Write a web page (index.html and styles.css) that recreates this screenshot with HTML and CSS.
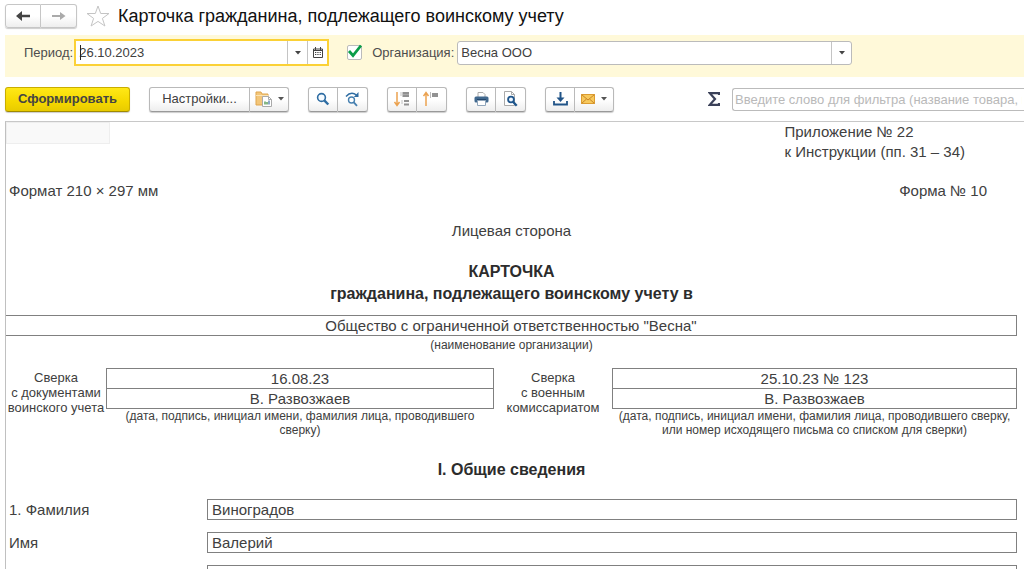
FILE: index.html
```html
<!DOCTYPE html>
<html lang="ru">
<head>
<meta charset="utf-8">
<meta name="viewport" content="width=device-width, initial-scale=1">
<title>Карточка гражданина, подлежащего воинскому учету</title>
<link rel="stylesheet" href="styles.css">
</head>
<body>
<header class="titlebar">
  <div class="btn-group nav">
    <button class="btn" type="button" aria-label="Назад"><svg width="14" height="10" viewBox="0 0 14 10"><path d="M6 0v3.700h8v2.600H6V10L0 5z" fill="#444"/></svg></button>
    <button class="btn" type="button" aria-label="Вперед"><svg width="14" height="10" viewBox="0 0 14 10"><path d="M8 1v3h-8v2h8v3L13.500 5z" fill="#aaa"/></svg></button>
  </div>
  <button class="star" type="button" aria-label="В избранное"><svg width="24" height="22" viewBox="0 0 24 22"><path d="M12 1l2.700 7.500H23l-6.600 4.900 2.500 7.600L12 16.400 5.100 21l2.500-7.600L1 8.500h8.300z" fill="#fff" stroke="#c4c4c4"/></svg></button>
  <h1 class="title">Карточка гражданина, подлежащего воинскому учету</h1>
</header>

<form class="filters">
  <label class="filter-label" for="period">Период:</label>
  <div class="field field-date">
    <input id="period" class="field-input" type="text" value="26.10.2023">
    <span class="caret"></span>
    <button class="field-btn" type="button" aria-label="Выбрать период"><svg width="6" height="4" viewBox="0 0 6 4"><path d="M0 0h6L3 3.500z" fill="#444"/></svg></button>
    <button class="field-btn" type="button" aria-label="Календарь"><svg width="10" height="11" viewBox="0 0 10 11"><path d="M.5 2h9v8.500h-9zM.5 3.500h9M2.500 0v3M7.500 0v3" fill="none" stroke="#444"/><path d="M2 5.500h6M2 7.500h6" stroke="#444" stroke-dasharray="1.300 1"/></svg></button>
  </div>
  <span class="check">
    <input id="use-org" class="check-input" type="checkbox" checked aria-label="Отбор по организации">
    <svg class="check-mark" width="16" height="15" viewBox="0 0 16 15"><path d="M2 7l4 4.500L14 1.500" fill="none" stroke="#0a9d48" stroke-width="2.800"/></svg>
  </span>
  <label class="filter-label org-label" for="org">Организация:</label>
  <div class="field field-org">
    <select id="org" class="field-input"><option>Весна ООО</option></select>
    <span class="field-btn"><svg width="6" height="4" viewBox="0 0 6 4"><path d="M0 0h6L3 3.500z" fill="#444"/></svg></span>
  </div>
</form>

<div class="toolbar">
  <button class="btn primary" type="button">Сформировать</button>
  <div class="btn-group">
    <button class="btn settings" type="button">Настройки...</button>
    <button class="btn wide" type="button" aria-label="Варианты отчета">
      <svg width="17" height="16" viewBox="0 0 17 16"><path d="M1 3V1h5l1 2h6v11H1z" fill="#f3c679" stroke="#dfa54e"/><path d="M1 4.500h12" stroke="#fbe3b4"/><path d="M7.500 5.500h6l3 3v7h-9z" fill="#fff" stroke="#aaa"/><path d="M13.500 5.500v3h3" fill="none" stroke="#aaa"/><path d="M10 13.500v-3M12 13.500V11" stroke="#5da05e" stroke-width="1.500"/><path d="M14 13.500v-4" stroke="#658bb5" stroke-width="1.500"/></svg>
      <svg width="6" height="4" viewBox="0 0 6 4"><path d="M0 0h6L3 3.500z" fill="#555"/></svg>
    </button>
  </div>
  <div class="btn-group">
    <button class="btn" type="button" aria-label="Найти"><svg width="14" height="14" viewBox="0 0 14 14"><circle cx="5.500" cy="5.500" r="3.900" fill="#f6fbff" stroke="#2f6da3" stroke-width="1.600"/><path d="M8.300 8.300l4 4.200" stroke="#2f6da3" stroke-width="2.400"/></svg></button>
    <button class="btn" type="button" aria-label="Найти далее"><svg width="15" height="15" viewBox="0 0 15 15"><path d="M1 4.500Q6-1 11.500 3" fill="none" stroke="#2f6da3" stroke-width="1.500"/><path d="M13.500 0v5H8.800z" fill="#2f6da3"/><circle cx="6.500" cy="8" r="3" fill="#fff" stroke="#4780b0" stroke-width="1.400"/><path d="M8.800 10.300l3.200 3.500" stroke="#4780b0" stroke-width="1.800"/></svg></button>
  </div>
  <div class="btn-group">
    <button class="btn" type="button" aria-label="Развернуть группы"><svg width="17" height="16" viewBox="0 0 17 16"><path d="M3 1v12M.5 11L3 14.500 5.500 11" fill="none" stroke="#eba250" stroke-width="1.500"/><path d="M7 1.500v4M8 9.500v4" stroke="#888" stroke-dasharray="1 1"/><path d="M8.500 1H15v5H8.500zM10 9h5v2h-5zM10 12.500h5v2h-5z" fill="#929292"/><path d="M9 3.500h6" stroke="#aaa"/></svg></button>
    <button class="btn" type="button" aria-label="Свернуть группы"><svg width="17" height="16" viewBox="0 0 17 16"><path d="M3 2v13M.5 5L3 1.500 5.500 5" fill="none" stroke="#eba250" stroke-width="1.500"/><path d="M7.500 1.500v5" stroke="#777" stroke-dasharray="1 1"/><path d="M9 2h6v4H9z" fill="#929292"/></svg></button>
  </div>
  <div class="btn-group">
    <button class="btn" type="button" aria-label="Печать"><svg width="15" height="14" viewBox="0 0 15 14"><path d="M4 5V.5h5l2 2V5" fill="#fff" stroke="#aaa"/><rect x=".5" y="4.500" width="14" height="6" rx="1.500" fill="#41698f"/><path d="M3 7.500h9" stroke="#23476d"/><path d="M3.500 8.500h8v5h-8z" fill="#fff" stroke="#91a6bb"/></svg></button>
    <button class="btn" type="button" aria-label="Предварительный просмотр"><svg width="15" height="16" viewBox="0 0 15 16"><path d="M1.500.5h7l3 3v11h-10z" fill="#fff" stroke="#aaa"/><path d="M8.500.5v3h3" fill="none" stroke="#aaa"/><circle cx="8" cy="8.500" r="2.900" fill="#eef6ff" stroke="#1f568c" stroke-width="1.800"/><path d="M10 10.700l3.700 4" stroke="#1f568c" stroke-width="2.400"/></svg></button>
  </div>
  <div class="btn-group">
    <button class="btn" type="button" aria-label="Сохранить"><svg width="15" height="14" viewBox="0 0 15 14"><path d="M7.500 0v7" stroke="#215488" stroke-width="2"/><path d="M3.500 5.500h8l-4 4.500z" fill="#215488"/><path d="M1 9v3.500h13V9" fill="none" stroke="#215488" stroke-width="1.800"/></svg></button>
    <button class="btn wide" type="button" aria-label="Отправить"><svg width="14" height="11" viewBox="0 0 14 11"><path d="M.5.5h13v9H.5z" fill="#f7c95d" stroke="#dc9c31"/><path d="M.5.5L7 6l6.500-5.500M.5 9.500l5-4.500M13.500 9.500l-5-4.500" fill="none" stroke="#c98525"/></svg><svg width="6" height="4" viewBox="0 0 6 4"><path d="M0 0h6L3 3.500z" fill="#555"/></svg></button>
  </div>
  <div class="search">
    <svg class="sigma" width="12" height="14" viewBox="0 0 12 14"><path d="M11 3V1.200H1.800L7 7l-5.200 5.800H11V11" fill="none" stroke="#3b4159" stroke-width="2.200"/></svg>
    <input class="search-input" type="text" aria-label="Фильтр" placeholder="Введите слово для фильтра (название товара, покупателя и пр.)">
  </div>
</div>

<main class="sheet">
  <div class="cell-cursor"></div>
  <div class="appendix">Приложение № 22<br>к Инструкции (пп. 31 – 34)</div>
  <div class="format-row"><span>Формат 210 × 297 мм</span><span>Форма № 10</span></div>
  <p class="side">Лицевая сторона</p>
  <h2 class="card-title">КАРТОЧКА<br>гражданина, подлежащего воинскому учету в</h2>
  <div class="org-name">Общество с ограниченной ответственностью "Весна"</div>
  <p class="org-note">(наименование организации)</p>
  <section class="checks">
    <div class="check-label">Сверка<br>с документами<br>воинского учета</div>
    <div>
      <div class="stamp"><div class="stamp-row">16.08.23</div><div class="stamp-row">В. Развозжаев</div></div>
      <p class="stamp-note">(дата, подпись, инициал имени, фамилия лица, проводившего<br>сверку)</p>
    </div>
    <div class="check-label">Сверка<br>с военным<br>комиссариатом</div>
    <div>
      <div class="stamp"><div class="stamp-row">25.10.23 № 123</div><div class="stamp-row">В. Развозжаев</div></div>
      <p class="stamp-note">(дата, подпись, инициал имени, фамилия лица, проводившего сверку,<br>или номер исходящего письма со списком для сверки)</p>
    </div>
  </section>
  <h3 class="section-title">I. Общие сведения</h3>
  <dl class="person">
    <dt>1. Фамилия</dt><dd>Виноградов</dd>
    <dt>Имя</dt><dd>Валерий</dd>
    <dt></dt><dd></dd>
  </dl>
</main>
</body>
</html>
```
FILE: styles.css
```css
* { box-sizing: border-box; }

body {
  margin: 0;
  height: 100vh;
  overflow: hidden;
  display: flex;
  flex-direction: column;
  background: #fff;
  color: #404040;
  font: 13px/20px "Liberation Sans", Arial, sans-serif;
}

h1, h2, h3, p, dl, dd { margin: 0; }
button, input, select { font: inherit; color: inherit; }
svg { display: block; flex: none; }

/* Title bar */
.titlebar {
  display: flex;
  align-items: center;
  height: 35px;
  padding: 0 5px 4px;
  flex: none;
}
.star { border: 0; background: none; padding: 0; margin: 0 8px 0 9px; }
.title { font-size: 18px; font-weight: 400; color: #111; white-space: nowrap; }

/* Buttons */
.btn-group { display: flex; flex: none; }
.btn {
  display: flex;
  align-items: center;
  justify-content: center;
  gap: 6px;
  width: 30px;
  height: 25px;
  padding: 0;
  border: 1px solid #b9b9b9;
  border-bottom-color: #999;
  background: linear-gradient(#fff 50%, #eee);
  box-shadow: 0 1px 1px #ccc;
  white-space: nowrap;
}
.btn-group .btn + .btn { border-left: 0; }
.btn-group .btn:first-child { border-radius: 3px 0 0 3px; }
.btn-group .btn:last-child { border-radius: 0 3px 3px 0; }
.nav .btn { width: 36px; height: 24px; border-color: #c6c6c6; }
.btn.wide { width: 39px; }
.btn.settings { width: 101px; }
.btn.primary {
  width: 125px;
  border-color: #c9ad00;
  border-bottom-color: #a08a00;
  border-radius: 3px;
  background: linear-gradient(#ffe817, #f5d800 60%, #e8cb00);
  font-weight: 700;
  color: #444;
}

/* Filters */
.filters {
  display: flex;
  align-items: flex-start;
  height: 42px;
  margin-left: 5px;
  padding: 4px 0 0 19px;
  background: #fff9d9;
  flex: none;
}
.filter-label { padding-top: 4px; color: #4d4d4d; white-space: nowrap; }
.field {
  position: relative;
  display: flex;
  height: 24px;
  margin-top: 2px;
  background: #fff;
  border: 1px solid #bbb;
  border-radius: 3px;
}
.field-date {
  width: 255px;
  height: 27px;
  margin: 0 18px 0 1px;
  border: 2px solid #fbd136;
  border-radius: 0;
}
.field-org { flex: 0 1 395px; margin-left: 3px; }
.field-input {
  flex: 1;
  min-width: 0;
  padding: 0 3px;
  border: 0;
  outline: 0;
  background: none;
  appearance: none;
}
.caret {
  position: absolute;
  left: 4px;
  top: 4px;
  width: 1px;
  height: 15px;
  background: #222;
}
.field-btn {
  display: flex;
  align-items: center;
  justify-content: center;
  width: 20px;
  padding: 0;
  border: 0;
  border-left: 1px solid #c4c4c4;
  background: none;
}
.field-org .field-btn { pointer-events: none; }
.check { position: relative; width: 15px; height: 15px; margin-top: 6px; }
.check-input {
  display: block;
  width: 15px;
  height: 15px;
  margin: 0;
  border: 1px solid #bbb;
  border-radius: 2px;
  background: #fff;
  appearance: none;
}
.check-mark { position: absolute; left: 0; top: -1px; pointer-events: none; }
.check-input:not(:checked) + .check-mark { display: none; }
.org-label { margin-left: 10px; }

/* Toolbar */
.toolbar {
  display: flex;
  align-items: center;
  gap: 19px;
  height: 44px;
  padding-left: 5px;
  flex: none;
}
.search { display: flex; align-items: center; flex: 1; margin-left: 75px; min-width: 0; }
.sigma { margin-right: 12px; }
.search-input {
  flex: 1;
  min-width: 0;
  height: 23px;
  padding: 0 2px;
  border: 1px solid #bbb;
  border-right: 0;
  border-radius: 3px 0 0 3px;
  background: #fff;
}
.search-input::placeholder { color: #b9b9b9; opacity: 1; }

/* Report sheet */
.sheet {
  position: relative;
  flex: 1;
  min-height: 0;
  overflow: hidden;
  margin-left: 5px;
  padding-right: 7px;
  border-top: 1px solid #c8c8c8;
  border-left: 1px solid #c0c0c0;
  font-size: 15px;
}
.cell-cursor {
  position: absolute;
  left: 0;
  top: 0;
  width: 104px;
  height: 22px;
  background: #f9f9f9;
  border: 1px solid #eee;
}
.appendix { margin-left: 77%; white-space: nowrap; }
.format-row {
  display: flex;
  justify-content: space-between;
  margin-top: 19px;
  padding: 0 30px 0 3px;
}
.side { margin-top: 20px; text-align: center; }
.card-title {
  margin-top: 20px;
  font-size: 16px;
  line-height: 22px;
  text-align: center;
  color: #2c2c2c;
}
.org-name {
  height: 21px;
  margin-top: 10px;
  border: 1px solid #808080;
  border-left: 0;
  text-align: center;
}
.org-note { font-size: 12px; line-height: 18px; text-align: center; }
.checks {
  display: grid;
  grid-template-columns: 100px 388fr 118px 405fr;
  margin-top: 14px;
  text-align: center;
}
.check-label { padding-top: 2px; font-size: 13px; line-height: 15px; white-space: nowrap; }
.stamp { border: 1px solid #808080; }
.stamp-row { height: 19px; }
.stamp-row + .stamp-row { height: 20px; border-top: 1px solid #808080; }
.stamp-note { font-size: 12px; line-height: 14px; white-space: nowrap; }
.section-title {
  margin-top: 23px;
  font-size: 16px;
  text-align: center;
  color: #2c2c2c;
}
.person {
  display: grid;
  grid-template-columns: 201px 1fr;
  row-gap: 12px;
  margin-top: 19px;
  line-height: 19px;
}
.person dt { padding: 1px 3px; }
.person dd { height: 21px; padding: 0 4px; border: 1px solid #808080; }
```
